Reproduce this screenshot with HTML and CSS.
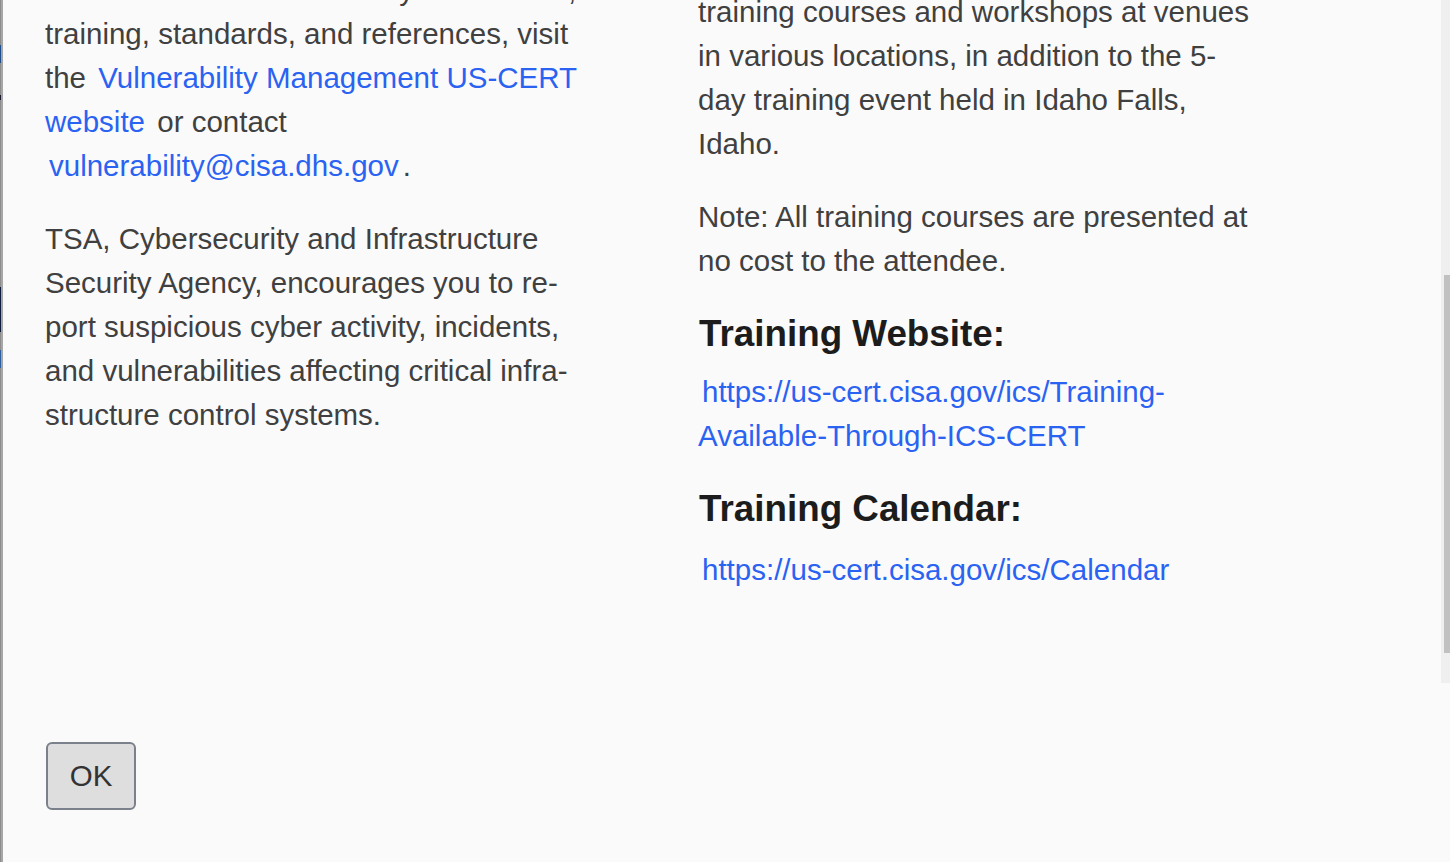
FILE: index.html
```html
<!DOCTYPE html>
<html lang="en">
<head>
<meta charset="utf-8">
<title>Dialog</title>
<link rel="stylesheet" href="styles.css">
</head>
<body>
<div class="screen">
  <div class="backdrop"></div>
  <div class="dialog">
    <div class="viewport">
      <div class="content">
        <div class="col col-left">
          <p>notes and other vulnerability information, training, standards, and references, visit the <a class="link" href="#">Vulnerability Management US-CERT website</a> or contact <a class="link" href="#">vulnerability@cisa.dhs.gov</a>.</p>
          <p>TSA, Cybersecurity and Infrastructure Security Agency, encourages you to re&shy;port suspicious cyber activity, incidents, and vulnerabilities affecting critical infra&shy;structure control systems.</p>
        </div>
        <div class="col col-right">
          <p>CISA offers ICS cybersecurity classroom training courses and workshops at venues in various locations, in addition to the 5-day training event held in Idaho Falls, Idaho.</p>
          <p>Note: All training courses are presented at no cost to the attendee.</p>
          <h3 class="heading">Training Website:</h3>
          <p><a class="link" href="#">https://us-cert.cisa.gov/ics/Training-Available-Through-ICS-CERT</a></p>
          <h3 class="heading">Training Calendar:</h3>
          <p class="last"><a class="link" href="#">https://us-cert.cisa.gov/ics/Calendar</a></p>
        </div>
      </div>
      <div class="scrollbar"><div class="thumb"></div></div>
    </div>
    <div class="footer">
      <button class="ok" type="button">OK</button>
    </div>
  </div>
</div>
</body>
</html>
```
FILE: styles.css
```css
* { box-sizing: border-box; }
html, body { margin: 0; padding: 0; }
body {
  font-family: "Liberation Sans", Arial, sans-serif;
  background: #fafafa;
  overflow: hidden;
}
.screen {
  display: flex;
  height: 862px;
}
.backdrop {
  width: 1px;
  background: linear-gradient(to bottom,
    #8c8c8c 0, #8c8c8c 45px, #1f4e8c 45px, #1f4e8c 63px, #8c8c8c 63px,
    #8c8c8c 95px, #1a1a2e 95px, #1a1a2e 100px, #8c8c8c 100px,
    #8c8c8c 287px, #0d1b3d 287px, #0d1b3d 332px, #8c8c8c 332px,
    #8c8c8c 350px, #2d5fa0 350px, #2d5fa0 368px, #8c8c8c 368px,
    #8c8c8c 100%);
}
.dialog {
  flex: 1;
  display: flex;
  flex-direction: column;
  border-left: 2px solid #a6a6a6;
  background: #fafafa;
}
.viewport {
  position: relative;
  height: 683px;
  overflow: hidden;
}
.content {
  display: grid;
  grid-template-columns: 545px 556px;
  column-gap: 108px;
  align-items: start;
  padding-left: 42px;
  margin-top: -54px;
}
.col-left { padding-top: 22px; }
.col p {
  margin: 0 0 29px;
  font-size: 29.5px;
  line-height: 44px;
  color: #404040;
}
.col p.last { padding-top: 3px; }
.heading {
  margin: 0 0 14px;
  padding-left: 1px;
  font-size: 36.8px;
  line-height: 44px;
  font-weight: bold;
  color: #1c1c1c;
}
.link {
  color: #2a62f2;
  text-decoration: none;
  padding: 0 4px;
}
.scrollbar {
  position: absolute;
  top: 0;
  right: 0;
  width: 9px;
  height: 683px;
  background: #efefef;
}
.thumb {
  margin: 275px 0 0 3px;
  width: 6px;
  height: 378px;
  background: #c1c1c1;
}
.footer {
  flex: 1;
  padding: 59px 0 0 43px;
}
.ok {
  width: 90px;
  height: 68px;
  border: 2px solid #7b818a;
  border-radius: 6px;
  background: #dedede;
  font-family: "Liberation Sans", Arial, sans-serif;
  font-size: 29.5px;
  color: #333333;
  padding: 0;
}
```
